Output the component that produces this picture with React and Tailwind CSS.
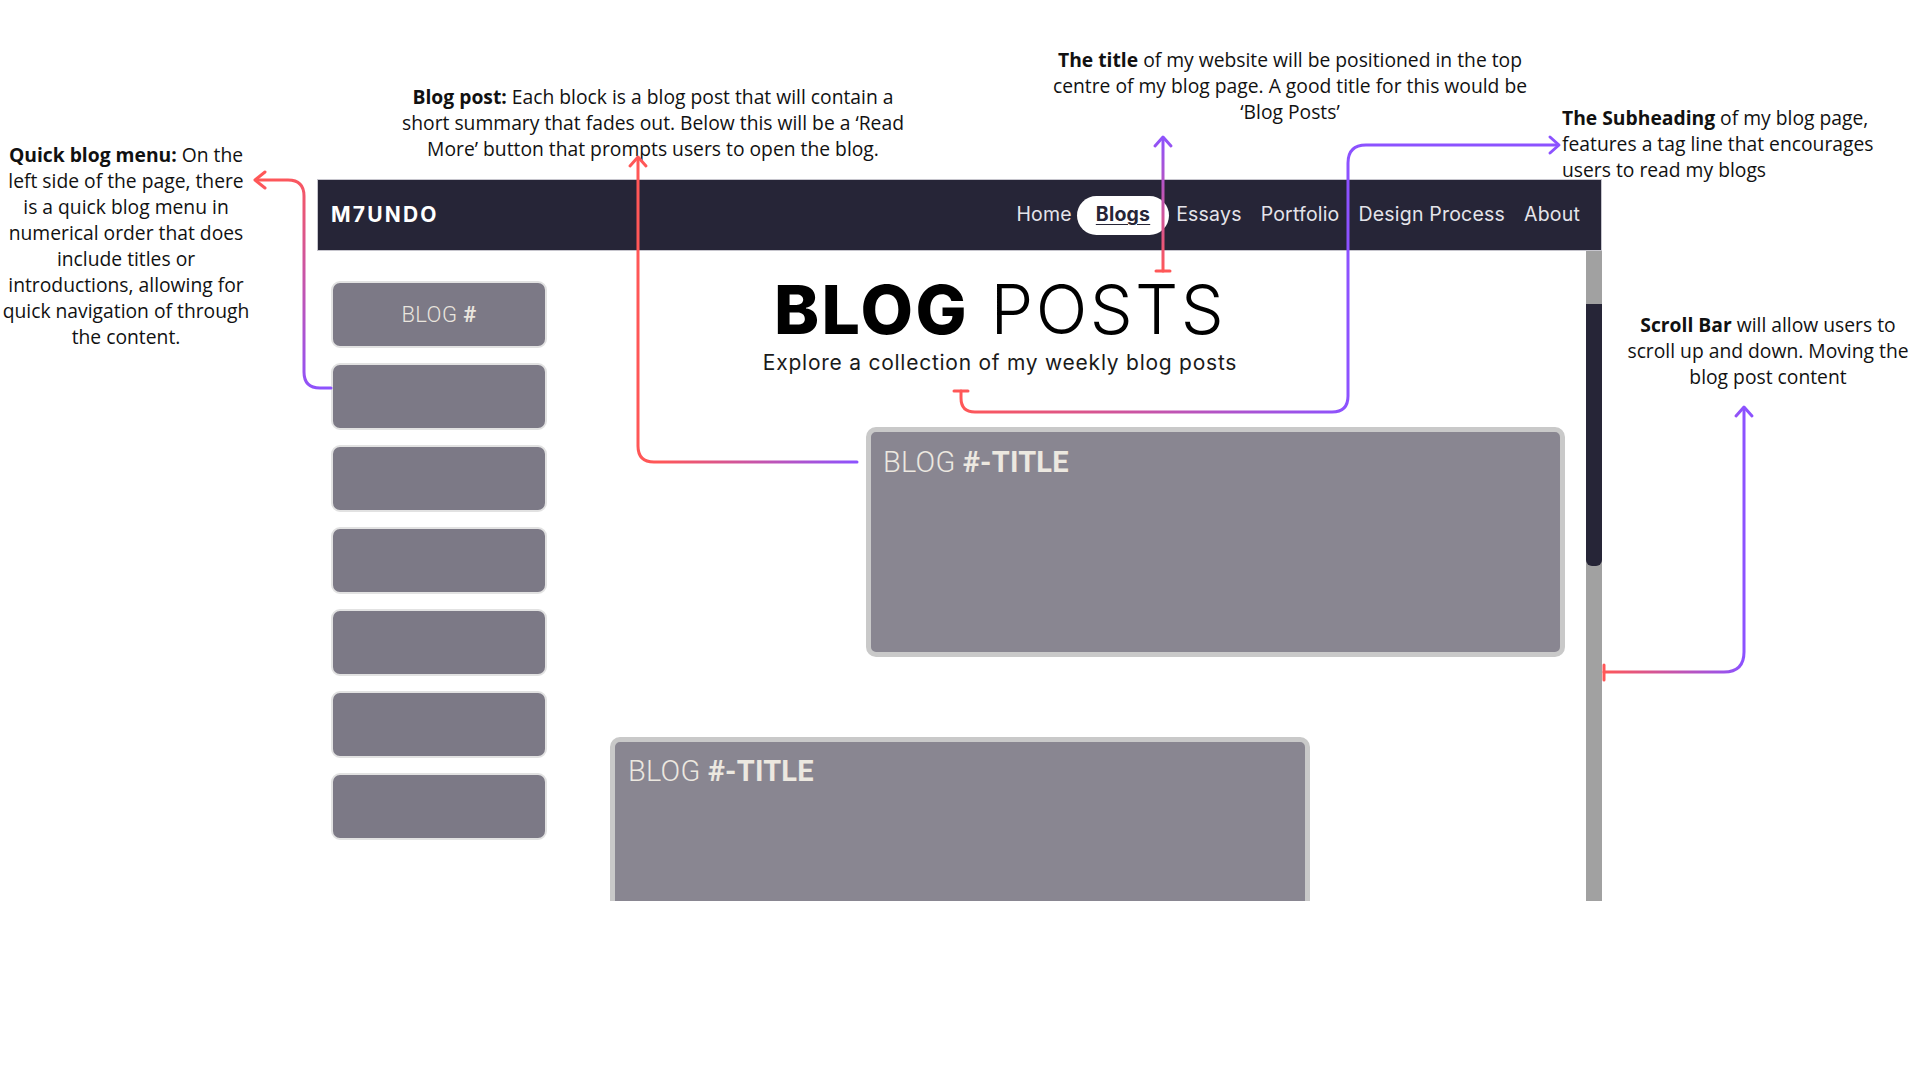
import React from 'react';

const RED = '#ff5757';
const PURPLE = '#8c52ff';

function Note({ className, children }) {
  return (
    <div className={`absolute text-[19.3px] leading-[26px] text-[#111] ${className}`}>
      {children}
    </div>
  );
}

function MenuButton({ label }) {
  return (
    <div className="w-[216px] h-[67px] rounded-[9px] border-2 border-[#e2e2e2] bg-[#7c7986] flex items-center justify-center font-['Roboto',sans-serif] text-[22px] tracking-[0.4px] text-[#e9e5de]">
      {label && (
        <span>
          <span className="font-light">BLOG </span>
          <span className="font-bold">#</span>
        </span>
      )}
    </div>
  );
}

function PostCard({ className }) {
  return (
    <div className={`shrink-0 h-[230px] rounded-[10px] border-[5px] border-[#c9c9c9] bg-[#898691] font-['Roboto',sans-serif] text-[29px] tracking-[0.2px] leading-none text-[#ece8e0] ${className}`}>
      <span className="font-light">BLOG </span>
      <span className="font-bold">#-TITLE</span>
    </div>
  );
}

function Arrows() {
  return (
    <svg
      className="absolute inset-0 pointer-events-none"
      width="1920"
      height="1080"
      viewBox="0 0 1920 1080"
      fill="none"
      strokeWidth="3"
      strokeLinecap="round"
      strokeLinejoin="round"
    >
      <defs>
        <linearGradient id="gMenu" gradientUnits="userSpaceOnUse" x1="331" y1="388" x2="262" y2="180">
          <stop offset="0" stopColor={PURPLE} />
          <stop offset="1" stopColor={RED} />
        </linearGradient>
        <linearGradient id="gPost" gradientUnits="userSpaceOnUse" x1="857" y1="462" x2="660" y2="462">
          <stop offset="0" stopColor={PURPLE} />
          <stop offset="1" stopColor={RED} />
        </linearGradient>
        <linearGradient id="gTitle" gradientUnits="userSpaceOnUse" x1="1163" y1="271" x2="1163" y2="135">
          <stop offset="0" stopColor={RED} />
          <stop offset="1" stopColor={PURPLE} />
        </linearGradient>
        <linearGradient id="gSub" gradientUnits="userSpaceOnUse" x1="961" y1="412" x2="1348" y2="412">
          <stop offset="0" stopColor={RED} />
          <stop offset="1" stopColor={PURPLE} />
        </linearGradient>
        <linearGradient id="gScroll" gradientUnits="userSpaceOnUse" x1="1604" y1="672" x2="1744" y2="672">
          <stop offset="0" stopColor={RED} />
          <stop offset="1" stopColor={PURPLE} />
        </linearGradient>
      </defs>

      {/* quick blog menu */}
      <g stroke="url(#gMenu)">
        <path d="M331 388 H320 Q304 388 304 372 V196 Q304 180 288 180 H256" />
        <path d="M265 172 L255 180 L265 188" />
      </g>

      {/* blog post */}
      <g stroke="url(#gPost)">
        <path d="M857 462 H654 Q638 462 638 446 V158" />
        <path d="M630 166 L638 157 L646 166" />
      </g>

      {/* title */}
      <g stroke="url(#gTitle)">
        <path d="M1163 271 V138" />
        <path d="M1156 271 H1170" />
        <path d="M1155 146 L1163 137 L1171 146" />
      </g>

      {/* subheading */}
      <g stroke="url(#gSub)">
        <path d="M954 391 H968" />
        <path d="M961 391 V398 Q961 412 975 412 H1332 Q1348 412 1348 396 V163 Q1348 145 1366 145 H1558" />
        <path d="M1550 137 L1559 145 L1550 153" />
      </g>

      {/* scroll bar */}
      <g stroke="url(#gScroll)">
        <path d="M1604 665 V680" />
        <path d="M1604 672 H1724 Q1744 672 1744 652 V410" />
        <path d="M1736 416 L1744 407 L1752 416" />
      </g>
    </svg>
  );
}

export default function App() {
  return (
    <div className="relative w-[1920px] h-[1080px] bg-white overflow-hidden font-['Open_Sans',sans-serif]">
      {/* annotations */}
      <Note className="left-0 top-[142px] w-[252px] text-center">
        <b>Quick blog menu:</b> On the<br />
        left side of the page, there<br />
        is a quick blog menu in<br />
        numerical order that does<br />
        include titles or<br />
        introductions, allowing for<br />
        quick navigation of through<br />
        the content.
      </Note>

      <Note className="left-[383px] top-[84px] w-[540px] text-center">
        <b>Blog post:</b> Each block is a blog post that will contain a<br />
        short summary that fades out. Below this will be a ‘Read<br />
        More’ button that prompts users to open the blog.
      </Note>

      <Note className="left-[1030px] top-[47px] w-[520px] text-center">
        <b>The title</b> of my website will be positioned in the top<br />
        centre of my blog page. A good title for this would be<br />
        ‘Blog Posts’
      </Note>

      <Note className="left-[1562px] top-[105px] w-[356px]">
        <b>The Subheading</b> of my blog page,<br />
        features a tag line that encourages<br />
        users to read my blogs
      </Note>

      <Note className="left-[1616px] top-[312px] w-[304px] text-center">
        <b>Scroll Bar</b> will allow users to<br />
        scroll up and down. Moving the<br />
        blog post content
      </Note>

      {/* wireframe */}
      <div className="absolute left-[317px] top-[179px] w-[1285px] h-[722px] flex flex-col overflow-hidden font-['Inter',sans-serif]">
        <nav className="h-[72px] shrink-0 bg-[#262537] border border-[#c6c5cd] flex items-center justify-between pl-[13px] pr-[21px]">
          <span className="text-white font-bold text-[21px] tracking-[2.2px]">M7UNDO</span>
          <div className="flex items-center text-[19.5px] tracking-[0.2px] text-[#e4e4ea]">
            <span>Home</span>
            <span className="ml-[5px] mr-[7px] h-[39px] px-[19px] rounded-full bg-white flex items-center font-bold text-[#262537] underline underline-offset-[3px]">
              Blogs
            </span>
            <span>Essays</span>
            <span className="ml-[19px]">Portfolio</span>
            <span className="ml-[19px]">Design Process</span>
            <span className="ml-[19px]">About</span>
          </div>
        </nav>

        <div className="flex flex-1 min-h-0">
          <div className="flex flex-1 min-w-0 overflow-hidden">
            <aside className="shrink-0 flex flex-col gap-[15px] pl-[14px] pt-[30px]">
              <MenuButton label />
              <MenuButton />
              <MenuButton />
              <MenuButton />
              <MenuButton />
              <MenuButton />
              <MenuButton />
            </aside>

            <main className="flex-1 flex flex-col">
              <div className="ml-[193px] w-[520px] pt-[24px] text-center text-black">
                <h1 className="text-[68px] leading-none tracking-[2.4px]">
                  <span className="font-extrabold">BLOG</span> <span className="font-light">POSTS</span>
                </h1>
                <p className="mt-[9px] text-[21px] leading-none tracking-[0.75px] text-[#1a1a1a]">
                  Explore a collection of my weekly blog posts
                </p>
              </div>

              <PostCard className="mt-[54px] ml-[319px] w-[699px] pt-[16px] pl-[12px]" />
              <PostCard className="mt-[80px] ml-[63px] w-[700px] pt-[15px] pl-[13px]" />
            </main>
          </div>

          <div className="w-[16px] shrink-0 bg-[#a1a1a1] pt-[53px]">
            <div className="h-[262px] bg-[#262537] rounded-b-[6px]" />
          </div>
        </div>
      </div>

      <Arrows />
    </div>
  );
}
